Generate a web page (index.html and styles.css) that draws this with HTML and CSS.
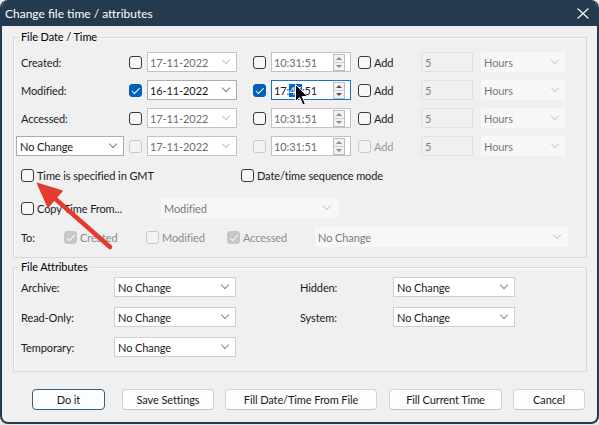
FILE: index.html
```html
<!DOCTYPE html>
<html>
<head>
<meta charset="utf-8">
<title>Change file time / attributes</title>
<link rel="stylesheet" href="styles.css">
</head>
<body>
<div class="stage">
  <div class="window">
    <div class="titlebar">
      <span class="title">Change file time / attributes</span>
      <svg class="close" width="12" height="11" viewBox="0 0 12 11"><path d="M0.5 0.5 L11.5 10.5 M11.5 0.5 L0.5 10.5" stroke="#ffffff" stroke-width="1.1" fill="none"/></svg>
    </div>
    <div class="client">
      <div class="group g1">
        <div class="gtitle">File Date / Time</div>
        <div class="dt-rows">
          <div class="row">
            <div class="lab">Created:</div>
            <span class="cb"></span>
            <div class="combo date dis">17-11-2022</div>
            <span class="cb tcb"></span>
            <div class="tbox dis"><span>10:31:51</span><span class="spin"><i class="up"></i><i class="dn"></i></span></div>
            <div class="add"><span class="cb"></span><span>Add</span></div>
            <div class="num">5</div>
            <div class="combo hours off">Hours</div>
          </div>
          <div class="row">
            <div class="lab">Modified:</div>
            <span class="cb on"></span>
            <div class="combo date">16-11-2022</div>
            <span class="cb tcb on"></span>
            <div class="tbox focus"><span>17:<span class="sel">45</span>:51</span><span class="spin"><i class="up"></i><i class="dn"></i></span></div>
            <div class="add"><span class="cb"></span><span>Add</span></div>
            <div class="num">5</div>
            <div class="combo hours off">Hours</div>
          </div>
          <div class="row">
            <div class="lab">Accessed:</div>
            <span class="cb"></span>
            <div class="combo date dis">17-11-2022</div>
            <span class="cb tcb"></span>
            <div class="tbox dis"><span>10:31:51</span><span class="spin"><i class="up"></i><i class="dn"></i></span></div>
            <div class="add"><span class="cb"></span><span>Add</span></div>
            <div class="num">5</div>
            <div class="combo hours off">Hours</div>
          </div>
          <div class="row">
            <div class="lab lab-combo"><div class="combo nochange">No Change</div></div>
            <span class="cb dis"></span>
            <div class="combo date dis">17-11-2022</div>
            <span class="cb tcb dis"></span>
            <div class="tbox dis"><span>10:31:51</span><span class="spin"><i class="up"></i><i class="dn"></i></span></div>
            <div class="add dis"><span class="cb dis"></span><span>Add</span></div>
            <div class="num">5</div>
            <div class="combo hours off">Hours</div>
          </div>
        </div>
        <div class="opt-row gmt-row">
          <div class="chk w-gmt"><span class="cb"></span><span>Time is specified in GMT</span></div>
          <div class="chk"><span class="cb"></span><span>Date/time sequence mode</span></div>
        </div>
        <div class="opt-row copy-row">
          <div class="chk w-copy"><span class="cb"></span><span>Copy Time From...</span></div>
          <div class="combo off copyfrom">Modified</div>
        </div>
        <div class="opt-row to-row">
          <div class="to-lab">To:</div>
          <div class="chk dis w-created"><span class="cb dis on"></span><span>Created</span></div>
          <div class="chk dis w-modified"><span class="cb dis"></span><span>Modified</span></div>
          <div class="chk dis w-accessed"><span class="cb dis on"></span><span>Accessed</span></div>
          <div class="combo off tocombo">No Change</div>
        </div>
      </div>

      <div class="group g2">
        <div class="gtitle">File Attributes</div>
        <div class="attrs">
          <div class="alab">Archive:</div>
          <div class="combo attr">No Change</div>
          <div class="alab alab-r">Hidden:</div>
          <div class="combo attr">No Change</div>
          <div class="alab">Read-Only:</div>
          <div class="combo attr">No Change</div>
          <div class="alab alab-r">System:</div>
          <div class="combo attr">No Change</div>
          <div class="alab">Temporary:</div>
          <div class="combo attr">No Change</div>
        </div>
      </div>

      <div class="btns">
        <div class="btn btn-doit">Do it</div>
        <div class="btn btn-save">Save Settings</div>
        <div class="btn btn-fill">Fill Date/Time From File</div>
        <div class="btn btn-cur">Fill Current Time</div>
        <div class="btn btn-cancel">Cancel</div>
      </div>
    </div>
  </div>

  <svg class="overlay" width="599" height="425" viewBox="0 0 599 425">
    <line x1="110" y1="247" x2="52" y2="196" stroke="#e53a2f" stroke-width="4.5" stroke-linecap="round"/>
    <polygon points="37.5,183.5 62,191 48,207" fill="#e53a2f" stroke="#e53a2f" stroke-width="1.5" stroke-linejoin="round"/>
    <path d="M295.5 84.5 L295.5 101.5 L299.5 97.5 L302.8 104.8 L305.3 103.8 L302.2 96.6 L307.8 96.6 Z" fill="#000000" stroke="#ffffff" stroke-width="1" stroke-linejoin="round"/>
  </svg>
</div>
</body>
</html>
```

FILE: styles.css
```css
* {
  box-sizing: border-box;
}

body {
  margin: 0;
  background: #e8e8e8;
  font-family: Lato, "Noto Sans", sans-serif;
  font-size: 11px;
  letter-spacing: -0.1px;
  color: #1a1a1a;
}

.stage {
  position: relative;
  width: 599px;
  height: 425px;
}

.window {
  width: 599px;
  height: 424px;
  background: #f0f0f0;
  border: 2px solid #243a4e;
  border-top: 0;
  border-radius: 8px;
  overflow: hidden;
}

.titlebar {
  height: 26px;
  background: #243a4e;
  color: #ffffff;
  display: flex;
  align-items: center;
  justify-content: space-between;
  padding: 1px 8px 0 3px;
}

.title {
  font-size: 12px;
  letter-spacing: 0;
}

.close {
  display: block;
  margin-top: -1px;
}

.client {
  display: flex;
  flex-direction: column;
}

.group {
  margin-left: 11px;
  width: 574px;
  border: 1px solid #d9d9d9;
  box-shadow: inset 1px 1px 0 #fbfbfb;
}

.g1 {
  margin-top: 11px;
  height: 221px;
}

.g2 {
  margin-top: 9px;
  height: 105px;
}

.gtitle {
  width: fit-content;
  margin: -8px 0 0 5px;
  padding: 0 2px;
  line-height: 14px;
  background: #f0f0f0;
  color: #000000;
}

.dt-rows {
  display: flex;
  flex-direction: column;
  gap: 8px;
  margin-top: 8px;
}

.row {
  display: flex;
  align-items: center;
  height: 20px;
}

.lab {
  width: 115px;
  padding-left: 7px;
  flex: none;
}

.lab-combo {
  padding-left: 2px;
}

/* checkboxes */
.cb {
  position: relative;
  flex: none;
  width: 13px;
  height: 13px;
  border: 1px solid #3a3a3a;
  border-radius: 3px;
  background: #f7f7f7;
}

.cb.on {
  background: #005fb8;
  border-color: #005fb8;
}

.cb.on::after {
  content: "";
  position: absolute;
  left: 3.5px;
  top: 1px;
  width: 3px;
  height: 6.5px;
  border: solid #ffffff;
  border-width: 0 1.4px 1.4px 0;
  transform: rotate(45deg);
}

.cb.dis {
  border-color: #c8c8c8;
  background: #f3f3f3;
}

.cb.dis.on {
  background: #c6c6c6;
  border-color: #c6c6c6;
}

.tcb {
  margin-left: 16px;
}

/* combo boxes */
.combo {
  position: relative;
  flex: none;
  display: flex;
  align-items: center;
  height: 20px;
  border: 1px solid #acacac;
  background: #ffffff;
  padding-left: 2px;
  color: #1a1a1a;
}

.combo::after {
  content: "";
  position: absolute;
  right: 7px;
  top: 4px;
  width: 5px;
  height: 5px;
  border: solid #808080;
  border-width: 0 1px 1px 0;
  transform: rotate(45deg);
}

.combo.dis {
  border-color: #c2c2c2;
  color: #6d6d6d;
}

.combo.dis::after {
  border-color: #c4c4c4;
}

.combo.off {
  border-color: #f7f7f7;
  background: #f7f7f7;
  color: #7a7a7a;
}

.combo.off::after {
  border-color: #cbcbcb;
}

.date {
  margin-left: 5px;
  width: 90px;
}

.nochange {
  width: 108px;
  padding-left: 3px;
}

.hours {
  margin-left: 8px;
  width: 85px;
}

/* time box */
.tbox {
  flex: none;
  margin-left: 5px;
  width: 80px;
  height: 20px;
  border: 1px solid #acacac;
  background: #ffffff;
  display: flex;
  align-items: center;
  justify-content: space-between;
  padding: 0 5px 0 2px;
  color: #1a1a1a;
}

.tbox.dis {
  border-color: #c2c2c2;
  color: #6d6d6d;
}

.tbox.focus {
  border-color: #1a73c9;
}

.sel {
  background: #0a64c8;
  color: #ffffff;
}

.spin {
  width: 12px;
  height: 17px;
  border: 1px solid #bdbdbd;
  background: #f2f2f2;
  display: flex;
  flex-direction: column;
}

.spin i {
  flex: 1;
  display: flex;
  align-items: center;
  justify-content: center;
}

.spin i + i {
  border-top: 1px solid #cfcfcf;
}

.spin .up::before {
  content: "";
  border-left: 3px solid transparent;
  border-right: 3px solid transparent;
  border-bottom: 3px solid #555555;
}

.spin .dn::before {
  content: "";
  border-left: 3px solid transparent;
  border-right: 3px solid transparent;
  border-top: 3px solid #555555;
}

.tbox.dis .spin .up::before {
  border-bottom-color: #8a8a8a;
}

.tbox.dis .spin .dn::before {
  border-top-color: #8a8a8a;
}

/* add */
.add {
  flex: none;
  margin-left: 7px;
  width: 63px;
  display: flex;
  align-items: center;
  gap: 3px;
}

.add.dis {
  color: #9a9a9a;
}

.num {
  flex: none;
  width: 52px;
  height: 20px;
  border: 1px solid #e2e2e2;
  background: #f0f0f0;
  color: #7d7d7d;
  padding-left: 3px;
  display: flex;
  align-items: center;
}

/* option rows */
.opt-row {
  display: flex;
  align-items: center;
  height: 20px;
  padding-left: 7px;
}

.gmt-row {
  margin-top: 9px;
}

.copy-row {
  margin-top: 13px;
}

.to-row {
  margin-top: 9px;
}

.chk {
  flex: none;
  display: flex;
  align-items: center;
  gap: 3px;
}

.chk.dis {
  color: #8c8c8c;
}

.w-gmt {
  width: 220px;
}

.w-copy {
  width: 140px;
}

.copyfrom {
  width: 177px;
}

.to-lab {
  width: 43px;
  padding-left: 0;
}

.w-created {
  width: 82px;
}

.w-modified {
  width: 81px;
}

.w-accessed {
  width: 88px;
}

.tocombo {
  width: 253px;
}

/* attributes */
.attrs {
  display: grid;
  grid-template-columns: 100px 122px 64px 93px 122px;
  grid-auto-rows: 20px;
  row-gap: 10px;
  margin-top: 3px;
  align-items: center;
}

.alab {
  padding-left: 7px;
}

.alab-r {
  grid-column: 4;
  padding-left: 0;
}

.combo.attr {
  width: 122px;
  border-color: #cfcfcf;
  padding-left: 3px;
}

.combo.attr::after {
  border-color: #8a8a8a;
}

/* buttons */
.btns {
  display: flex;
  margin: 17px 0 0 30px;
}

.btn {
  flex: none;
  height: 21px;
  border: 1px solid #d3d3d3;
  border-bottom-color: #c2c2c2;
  border-radius: 4px;
  background: #fdfdfd;
  display: flex;
  align-items: center;
  justify-content: center;
  color: #1a1a1a;
}

.btn-doit {
  width: 73px;
  border-color: #2f5f82;
  background: #fbfdfe;
}

.btn-save {
  width: 92px;
  margin-left: 17px;
}

.btn-fill {
  width: 152px;
  margin-left: 11px;
}

.btn-cur {
  width: 113px;
  margin-left: 12px;
}

.btn-cancel {
  width: 72px;
  margin-left: 11px;
}

.overlay {
  position: absolute;
  left: 0;
  top: 0;
  pointer-events: none;
}
```
